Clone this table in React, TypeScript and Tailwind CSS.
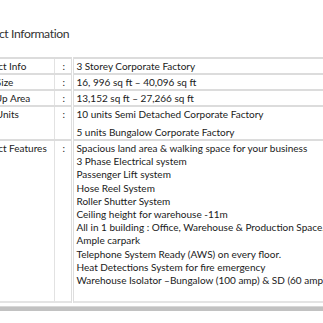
import React from 'react';

interface InfoRow {
  label: string;
  values: string[];
  spaced?: boolean;
}

const rows: InfoRow[] = [
  { label: 'Product Info', values: ['3 Storey Corporate Factory'] },
  { label: 'Land Size', values: ['16, 996 sq ft – 40,096 sq ft'] },
  { label: 'Built Up Area', values: ['13,152 sq ft – 27,266 sq ft'] },
  {
    label: 'Total Units',
    values: ['10 units Semi Detached Corporate Factory', '5 units Bungalow Corporate Factory'],
    spaced: true,
  },
  {
    label: 'Product Features',
    values: [
      'Spacious land area & walking space for your business',
      '3 Phase Electrical system',
      'Passenger Lift system',
      'Hose Reel System',
      'Roller Shutter System',
      'Ceiling height for warehouse -11m',
      'All in 1 building : Office, Warehouse & Production Space.',
      'Ample carpark',
      'Telephone System Ready (AWS) on every floor.',
      'Heat Detections System for fire emergency',
      'Warehouse Isolator –Bungalow (100 amp) & SD (60 amp)',
    ],
  },
];

const App: React.FC = () => {
  return (
    <div className="w-[323px] h-[323px] overflow-hidden bg-white text-[#1a1a1a] font-['Lato','Liberation_Sans',sans-serif]">
      <div className="ml-[-29px] w-[400px]">
        <h2 className="pt-[25px] ml-[-2px] text-[12.2px] leading-[18px] tracking-[-0.4px] text-[#333]">
          Product Information
        </h2>

        <table className="mt-[14px] w-full border-collapse text-[10px] leading-[13px]">
          <tbody>
            {rows.map((row, i) => {
              const last = i === rows.length - 1;
              return (
                <tr key={i} className="border-t-2 border-[#dcdcdc] align-top">
                  <td className="w-[83px] whitespace-nowrap border-r border-[#e2e2e2] pl-px pt-px">{row.label}</td>
                  <td className="w-[18px] border-r-[3px] border-double border-[#dedede] pl-[8px] pt-px">:</td>
                  <td className={last ? 'pl-[3px] pt-px pb-[14px] whitespace-nowrap leading-[13.2px]' : 'pl-[3px] pt-px whitespace-nowrap'}>
                    {row.values.map((v, j) => (
                      <div key={j} className={row.spaced && j > 0 ? 'mt-[5px]' : ''}>
                        {v}
                      </div>
                    ))}
                  </td>
                </tr>
              );
            })}
            <tr className="border-t-2 border-[#e4e4e4]">
              <td colSpan={3} className="h-[4px]" />
            </tr>
          </tbody>
        </table>
        <div className="h-[5px] border-t border-[#d8d8d8] bg-[#c2c2c2]" />
      </div>
    </div>
  );
};

export default App;
